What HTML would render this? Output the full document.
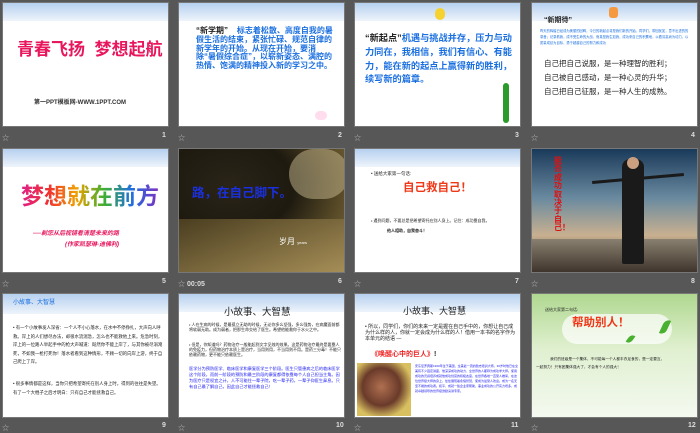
<!DOCTYPE html>
<html><head><meta charset="utf-8"><style>
*{margin:0;padding:0;box-sizing:border-box}
body{width:700px;height:431px;background:#575757;position:relative;overflow:hidden;font-family:"Liberation Sans","Noto Sans CJK SC",sans-serif}
.s{position:absolute;width:167px;height:125px;background:#fff;overflow:hidden;border:1px solid #777}
.hd{position:absolute;left:0;top:0;right:0;height:18px;background:linear-gradient(#b6d0ef,#eef4fb)}
.n{position:absolute;font-size:7px;color:#ddd;font-weight:bold}
.st{position:absolute;font-size:7px;color:#bbb}
.t{position:absolute;font-family:"Liberation Sans","Noto Sans CJK SC",sans-serif;white-space:nowrap;line-height:1.2}
</style></head><body>

<!-- row1 -->
<div class="s" style="left:2px;top:2px"><div class="hd"></div>
<div class="t" style="left:14px;top:37px;font-size:17px;color:#e8175d;font-weight:bold">青春飞扬&nbsp;&nbsp;梦想起航</div>
<div class="t" style="left:31px;top:97px;font-size:6px;color:#333;font-weight:bold">第一PPT模板网-WWW.1PPT.COM</div></div>

<div class="s" style="left:178px;top:2px"><div class="hd"></div>
<div class="t" style="left:17px;top:24px;font-size:8px;color:#1a6fe0;font-weight:bold;line-height:1.1;white-space:normal;width:138px"><span style="color:#222">“新学期”</span>&nbsp;&nbsp;&nbsp;&nbsp;标志着松散、高度自我的暑假生活的结束，紧张忙碌、规范自律的新学年的开始。从现在开始，要消除“暑假综合症”，以崭新姿态、满腔的热情、饱满的精神投入新的学习之中。</div>
<div style="position:absolute;left:136px;top:108px;width:12px;height:9px;background:#fde;border-radius:5px"></div></div>

<div class="s" style="left:354px;top:2px"><div class="hd"></div>
<div style="position:absolute;left:80px;top:5px;width:10px;height:12px;background:#f5d230;border-radius:5px"></div>
<div class="t" style="left:10px;top:29px;font-size:9.2px;color:#1a6fe0;font-weight:bold;line-height:1.5;white-space:normal;width:152px"><span style="color:#222">“新起点”</span>机遇与挑战并存，压力与动力同在，我相信，我们有信心、有能力，能在新的起点上赢得新的胜利，续写新的篇章。</div>
<div style="position:absolute;left:148px;top:80px;width:6px;height:40px;background:#2a9a2a;border-radius:3px"></div></div>

<div class="s" style="left:531px;top:2px"><div class="hd"></div>
<div style="position:absolute;left:77px;top:4px;width:9px;height:11px;background:#f59a40;border-radius:3px"></div>
<div class="t" style="left:12px;top:14px;font-size:7px;color:#222;font-weight:bold">“新期待”</div>
<div class="t" style="left:8px;top:26px;font-size:3.3px;color:#1a6fe0;white-space:normal;width:150px;line-height:1.8">昨天的辉煌已经成为美丽的回眸，今日的新起点将是我们新的开始。同学们，带回犹如，意不出进的的录音；记录着我，成不受生命的大战，而真是我生如我，成功来自己的积累地，以看清高尚为动力，以质量成绩为目标，勇于超越自己的努力和成功</div>
<div class="t" style="left:12px;top:54px;font-size:7.5px;color:#222;line-height:1.88">自己把自己说服，是一种理智的胜利；<br>自己被自己感动，是一种心灵的升华；<br>自己把自己征服，是一种人生的成熟。</div></div>

<div class="st" style="left:2px;top:133px">☆</div><div class="n" style="left:162px;top:132px">1</div>
<div class="st" style="left:178px;top:133px">☆</div><div class="n" style="left:338px;top:132px">2</div>
<div class="st" style="left:354px;top:133px">☆</div><div class="n" style="left:515px;top:132px">3</div>
<div class="st" style="left:531px;top:133px">☆</div><div class="n" style="left:691px;top:132px">4</div>

<!-- row2 -->
<div class="s" style="left:2px;top:148px"><div class="hd"></div>
<div class="t" style="left:18px;top:34px;font-size:23px;font-weight:bold;background:linear-gradient(90deg,#e0208a,#f03030,#f0a000,#40b030,#2070e0,#8030c0);-webkit-background-clip:text;background-clip:text;color:transparent">梦想就在前方</div>
<div class="t" style="left:30px;top:82px;font-size:6px;color:#e8175d;font-weight:bold;font-style:italic">----剃您从后视镜看清楚未来的路</div>
<div class="t" style="left:62px;top:93px;font-size:6px;color:#e8175d;font-weight:bold;font-style:italic">(作家凯瑟琳-迪佛利)</div></div>

<div class="s" style="left:178px;top:148px;background:radial-gradient(ellipse at 30% 30%,#2a2418,#1e1a10 40%,#5a4c28 70%,#8a7a48);">
<div style="position:absolute;left:110px;top:0;width:60px;height:50px;background:#c8b990;opacity:.5;border-radius:30px"></div>
<div style="position:absolute;left:0;top:70px;width:170px;height:55px;background:linear-gradient(160deg,#4a3e20,#a89058)"></div>
<div class="t" style="left:13px;top:37px;font-size:12.5px;color:#1a30e0;font-weight:bold">路，在自己脚下。</div>
<div class="t" style="left:100px;top:88px;font-size:8px;color:#fff">岁月 <span style="font-size:4px">years</span></div></div>

<div class="s" style="left:354px;top:148px"><div class="hd"></div>
<div class="t" style="left:16px;top:22px;font-size:4.5px;color:#222">• 送给大家第一句话:</div>
<div class="t" style="left:48px;top:33px;font-size:11.5px;color:#f03818;font-weight:bold">自己救自己！</div>
<div class="t" style="left:16px;top:70px;font-size:4px;color:#222">• 遇到问题，不要总是把希望寄托在别人身上。记住：成功靠自我，</div>
<div class="t" style="left:32px;top:80px;font-size:4px;color:#222;font-weight:bold">他人相助，自我奋斗！</div></div>

<div class="s" style="left:531px;top:148px;background:linear-gradient(#1a3a5a,#6a8aa0 40%,#c8b090 70%,#5a4a3a)">
<div style="position:absolute;left:0;top:90px;width:167px;height:35px;background:linear-gradient(#8a8070,#3a3028)"></div>
<div style="position:absolute;left:90px;top:10px;width:22px;height:105px;background:#1a1a1a;border-radius:8px 8px 2px 2px"></div>
<div style="position:absolute;left:95px;top:8px;width:12px;height:12px;background:#caa080;border-radius:6px"></div>
<div style="position:absolute;left:60px;top:28px;width:92px;height:3px;background:#1a1a1a;transform:rotate(-5deg)"></div>
<div class="t" style="left:22px;top:8px;font-size:8px;color:#e01010;font-weight:bold;line-height:1.05;white-space:normal;width:9px">能否成功取决于自己！</div></div>

<div class="st" style="left:2px;top:279px">☆</div><div class="n" style="left:162px;top:278px">5</div>
<div class="st" style="left:178px;top:279px">☆ <span style="color:#ddd;font-weight:bold">00:05</span></div><div class="n" style="left:338px;top:278px">6</div>
<div class="st" style="left:354px;top:279px">☆</div><div class="n" style="left:515px;top:278px">7</div>
<div class="st" style="left:531px;top:279px">☆</div><div class="n" style="left:691px;top:278px">8</div>

<!-- row3 -->
<div class="s" style="left:2px;top:293px"><div class="hd" style="height:20px"></div>
<div class="t" style="left:10px;top:6px;font-size:6px;color:#1a6fe0">小故事、大智慧</div>
<div class="t" style="left:10px;top:30px;font-size:4.4px;color:#222;white-space:normal;width:150px;line-height:1.95">• 有一个小故事发人深省：一个人不小心落水，在水中不停挣扎，大声向人呼救。岸上的人们想尽办法，却很水流湍急，怎么也不能救他上来。危急时刻，岸上的一位路人举起手中的枪大声喊道：既然你不能上岸了，与其你被尽溺淹死，不如我一枪打死你！落水者看到这种情形，不顾一切的向岸上游，终于自己爬上了岸。</div>
<div class="t" style="left:10px;top:86px;font-size:4.4px;color:#222;white-space:normal;width:150px;line-height:1.95">• 很多事情都是这样，当你只把希望寄托在别人身上时，得到的往往是失望。有了一个大棍子之后才明白：只有自己才能拯救自己。</div></div>

<div class="s" style="left:178px;top:293px"><div class="hd"></div>
<div class="t" style="left:45px;top:13px;font-size:9.5px;color:#222">小故事、大智慧</div>
<div class="t" style="left:10px;top:28px;font-size:4px;color:#222;white-space:normal;width:152px;line-height:1.3">• 人在生病的时候，是最孤立无助的时候，无论你多么坚强，多么强势，在病魔面前都将软弱无助。成为弱者，把那生命交给了医生。希望他能救你于水火之中。</div>
<div class="t" style="left:10px;top:48px;font-size:4px;color:#222;white-space:normal;width:152px;line-height:1.3">• 但是，你知道吗？药物治疗一般能起到文字见效的效果。这是药物治疗最终是要靠人的免疫力，但药物治疗本质上是治疗，当用则用，不当用则不用。是药三分毒！不能只依赖药物，更不能只依赖医生。</div>
<div class="t" style="left:10px;top:72px;font-size:4.2px;color:#1a1af0;white-space:normal;width:152px;line-height:1.45">医学分为预防医学、临床医学和康复医学三个阶段。医生只管患病之后的临床医学这个阶段，而前一阶段的预防和最三阶段的康复都得依靠每个人自己担当主角。因为医疗只是权宜之计，人不可能住一辈子院，吃一辈子药，一辈子仰医生鼻息。只有自己最了解自己，因此自己才能拯救自己！</div></div>

<div class="s" style="left:354px;top:293px"><div class="hd"></div>
<div class="t" style="left:48px;top:12px;font-size:9px;color:#222">小故事、大智慧</div>
<div class="t" style="left:10px;top:31px;font-size:5px;color:#222;white-space:normal;width:152px;line-height:1.15">• 所以，同学们，你们的未来一定是握在自己手中的，你想让自己成为什么样的人，你就一定会成为什么样的人！借用一本书的名字作为本单元的结语 —</div>
<div class="t" style="left:16px;top:57px;font-size:7px;color:#f02020;font-weight:bold">《唤醒心中的巨人》<span style="color:#222">!</span></div>
<div style="position:absolute;left:2px;top:69px;width:54px;height:53px;background:radial-gradient(circle at 45% 45%,#b07050,#6a3a2a 45%,#d8c060 75%)"></div>
<div class="t" style="left:60px;top:70px;font-size:3px;color:#1a1af0;white-space:normal;width:103px;line-height:1.7">安东尼罗宾斯1960年生于美国，全美最一流的励志培训大师。30岁时他已在全美有不少固定讲座，他深深成功的动力，全世界的人都称为成功学大师。使用成功的灵感培养成就他成功创富的积极态度，在世界各地一直受人推崇，在这位世界级大师的身上，处处展现着永恒智慧，使成为最受人欢迎。成为一名无坚不摧的成功者。和平，成就一些企业家帮助，事业成功的公开实力增多，成就卓越领导的世界级激励演讲专家。</div></div>

<div class="s" style="left:531px;top:293px;background:linear-gradient(#b0d890,#e0f0d0 45%,#f4f9f0)">
<div style="position:absolute;left:30px;top:20px;width:110px;height:30px;background:#fff;opacity:.7;border-radius:20px"></div>
<div class="t" style="left:13px;top:14px;font-size:4px;color:#222">送给大家第二句话:</div>
<div class="t" style="left:40px;top:23px;font-size:11.5px;color:#f03818;font-weight:bold">帮助别人！</div>
<div style="position:absolute;left:130px;top:25px;width:6px;height:16px;background:#4ab030;border-radius:6px 0;transform:rotate(25deg)"></div>
<div style="position:absolute;left:96px;top:40px;width:5px;height:10px;background:#4ab030;border-radius:5px 0;transform:rotate(35deg)"></div>
<div class="t" style="left:18px;top:63px;font-size:3.7px;color:#222">我们的班级是一个集体，不可能每一个人都丰衣足食的，是一定要互，</div>
<div class="t" style="left:4px;top:71px;font-size:3.7px;color:#222">一起努力！只有团集体强大了，才会有个人的强大！</div></div>

<div class="st" style="left:2px;top:423px">☆</div><div class="n" style="left:162px;top:422px">9</div>
<div class="st" style="left:178px;top:423px">☆</div><div class="n" style="left:336px;top:422px">10</div>
<div class="st" style="left:354px;top:423px">☆</div><div class="n" style="left:511px;top:422px">11</div>
<div class="st" style="left:531px;top:423px">☆</div><div class="n" style="left:688px;top:422px">12</div>
</body></html>
